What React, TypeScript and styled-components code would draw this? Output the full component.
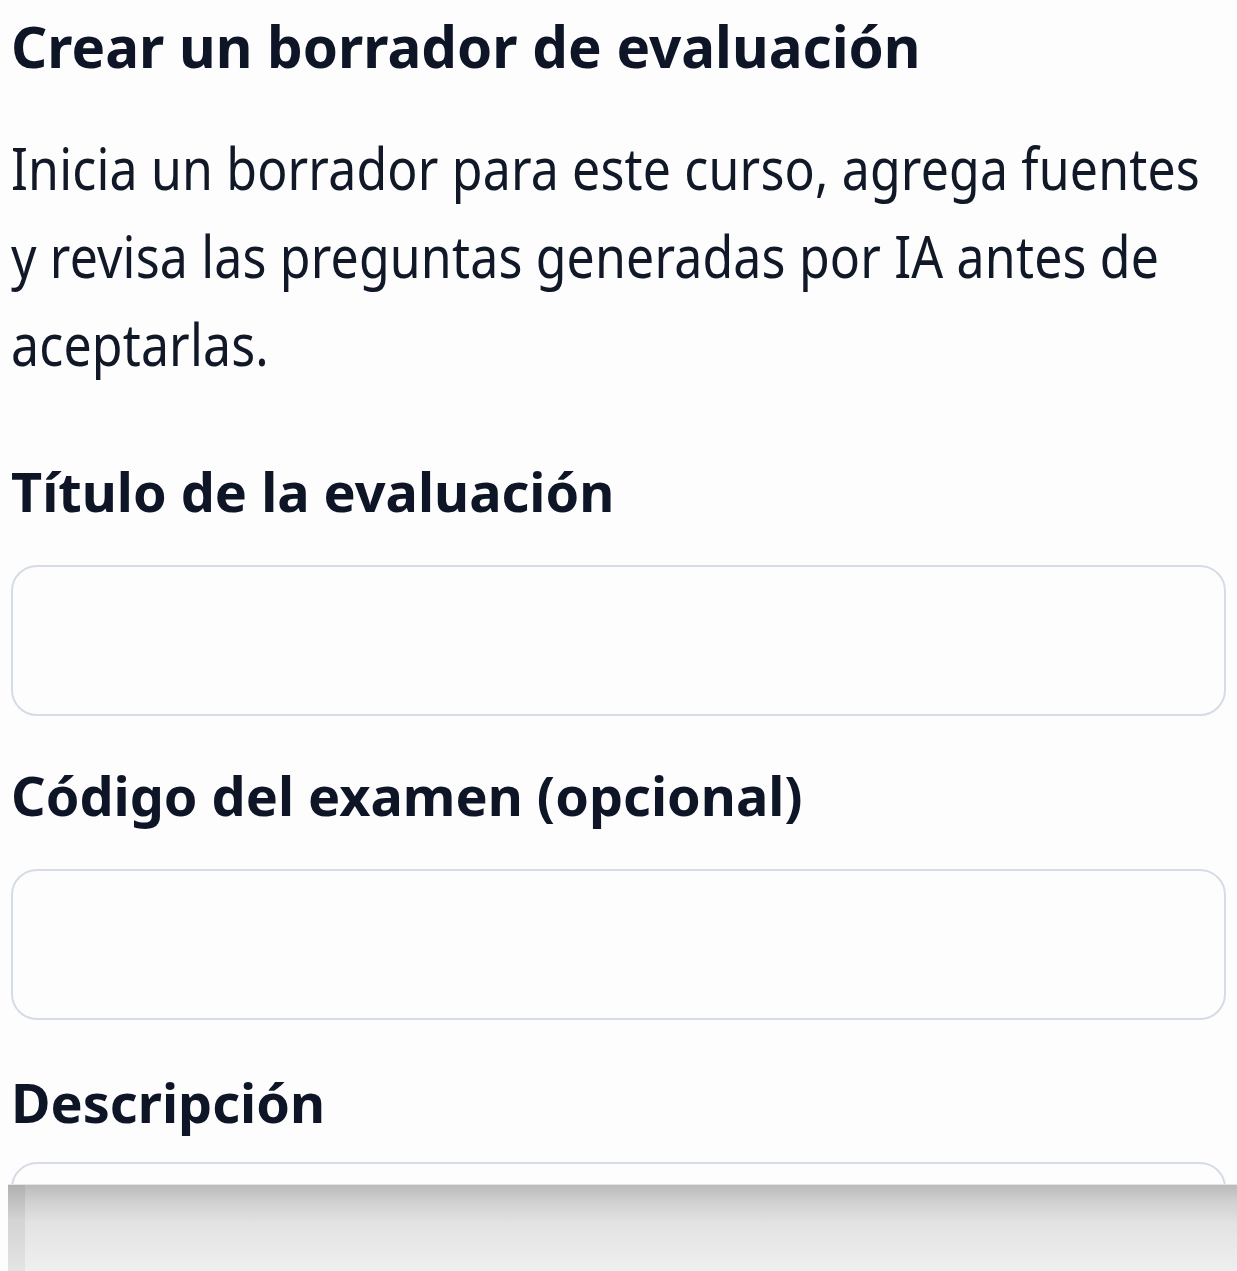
import React from "react";
import styled, { createGlobalStyle } from "styled-components";

const GlobalStyle = createGlobalStyle`
  html, body {
    margin: 0;
    padding: 0;
    background: #fdfdfd;
  }
  body {
    font-family: "Noto Sans", "Open Sans", sans-serif;
    color: #0f172a;
  }
`;

const Page = styled.main`
  position: relative;
  height: 1271px;
  overflow: hidden;
  box-sizing: border-box;
  padding: 13px 11px 0;
`;

const Heading = styled.h1`
  margin: 0;
  font-size: 56.5px;
  line-height: 67px;
  font-weight: 700;
  color: #0d1526;
`;

// the body copy in the shot is narrow and tall, so it is drawn a bit larger
// and squeezed sideways; the width is widened to keep the same line breaks
const Intro = styled.p`
  margin: 44px 0 0;
  width: 1392px;
  font-size: 58px;
  line-height: 88px;
  font-weight: 400;
  letter-spacing: 0.2px;
  color: #111827;
  transform: scaleX(0.862);
  transform-origin: left top;
`;

const Form = styled.form`
  display: flex;
  flex-direction: column;
`;

const Field = styled.div<{ $top: number }>`
  display: flex;
  flex-direction: column;
  margin-top: ${(p) => p.$top}px;
`;

const Label = styled.label`
  font-size: 54px;
  line-height: 65px;
  font-weight: 700;
  color: #0d1526;
`;

const TextInput = styled.div<{ $gap: number }>`
  margin-top: ${(p) => p.$gap}px;
  height: 151px;
  box-sizing: border-box;
  border: 2px solid #d6dce6;
  border-radius: 26px;
  background: #fdfdfd;
`;

const TextArea = styled(TextInput)`
  height: 260px;
`;

const BottomSheet = styled.div`
  position: absolute;
  left: 8px;
  right: 0;
  bottom: 0;
  height: 86px;
  border-top: 1px solid #e4e4e4;
  background: linear-gradient(
    180deg,
    #bababa 0%,
    #cfcfcf 18%,
    #e3e3e3 45%,
    #efefef 100%
  );

  &::before {
    content: "";
    position: absolute;
    left: 0;
    top: 0;
    bottom: 0;
    width: 17px;
    background: linear-gradient(180deg, #b0b0b0 0%, #d3d3d3 40%, #e4e4e4 100%);
  }
`;

export default function App() {
  return (
    <>
      <GlobalStyle />
      <Page>
        <Heading>Crear un borrador de evaluación</Heading>
        <Intro>
          Inicia un borrador para este curso, agrega fuentes y revisa las
          preguntas generadas por IA antes de aceptarlas.
        </Intro>
        <Form>
          <Field $top={71}>
            <Label>Título de la evaluación</Label>
            <TextInput $gap={41} />
          </Field>
          <Field $top={47}>
            <Label>Código del examen (opcional)</Label>
            <TextInput $gap={41} />
          </Field>
          <Field $top={50}>
            <Label>Descripción</Label>
            <TextArea $gap={27} />
          </Field>
        </Form>
        <BottomSheet />
      </Page>
    </>
  );
}
